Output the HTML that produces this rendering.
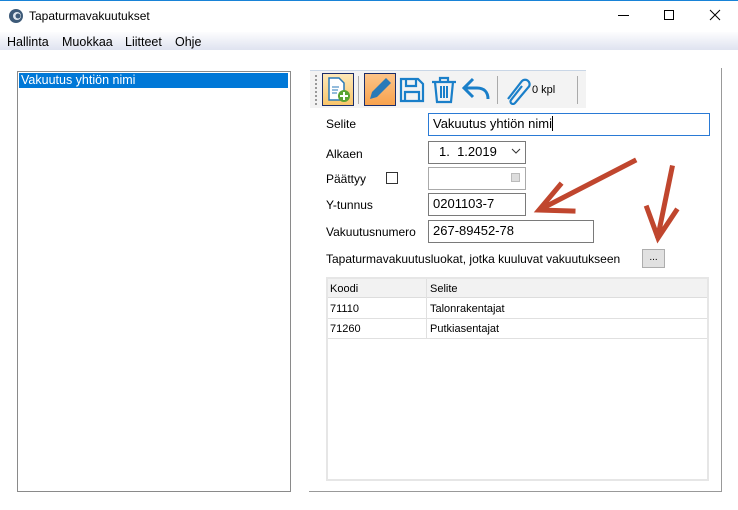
<!DOCTYPE html>
<html><head><meta charset="utf-8"><style>
*{margin:0;padding:0;box-sizing:border-box}
body{width:738px;height:510px;background:#fff;position:relative;overflow:hidden;font-family:"Liberation Sans",sans-serif;font-size:12px;color:#000}
.a{position:absolute}
.inp{position:absolute;border:1px solid #7a7a7a;background:#fff;font-size:13px;padding:2px 0 0 4px;height:23px}
.lbl{position:absolute;font-size:12px}
</style></head><body>
<div class="a" style="left:0;top:0;width:738px;height:1px;background:#1883d7"></div>
<svg class="a" style="left:8px;top:8px" width="16" height="16"><circle cx="8" cy="8" r="7" fill="#3d5a78"/><circle cx="9" cy="8" r="4" fill="#dfe6ee"/><circle cx="10" cy="8" r="2.5" fill="#3d5a78"/></svg>
<div class="a" style="left:29px;top:9px;font-size:12px">Tapaturmavakuutukset</div>
<div class="a" style="left:618px;top:15px;width:11px;height:1px;background:#000"></div>
<div class="a" style="left:664px;top:10px;width:10px;height:10px;border:1px solid #000"></div>
<svg class="a" style="left:709px;top:9px" width="12" height="12"><path d="M1 1L11 11M11 1L1 11" stroke="#000" stroke-width="1"/></svg>
<div class="a" style="left:0;top:32px;width:738px;height:18px;background:linear-gradient(#fdfdfe,#dfe3f0)"></div>
<div class="a" style="left:7px;top:35px;font-size:12.5px">Hallinta</div>
<div class="a" style="left:62px;top:35px;font-size:12.5px">Muokkaa</div>
<div class="a" style="left:125px;top:35px;font-size:12.5px">Liitteet</div>
<div class="a" style="left:175px;top:35px;font-size:12.5px">Ohje</div>
<div class="a" style="left:17px;top:71px;width:274px;height:421px;border:1px solid #8a8a8a"></div>
<div class="a" style="left:19px;top:73px;width:269px;height:15px;background:#0078d7;color:#fff;font-size:12.5px;padding-left:2px;line-height:15px">Vakuutus yhtiön nimi</div>
<div class="a" style="left:309px;top:491px;width:413px;height:1px;background:#999"></div>
<div class="a" style="left:721px;top:68px;width:1px;height:424px;background:#999"></div>
<div class="a" style="left:310px;top:70px;width:276px;height:38px;background:#f3f3f3;border-top:1px solid #c9d6e6"></div>
<div class="a" style="left:315px;top:75px;width:2px;height:30px;border-left:2px dotted #999"></div>
<div class="a" style="left:322px;top:73px;width:32px;height:33px;background:linear-gradient(#fde8b8,#f9c56a);border:1px solid #1b2d6a"></div>
<svg class="a" style="left:326px;top:76px" width="26" height="28"><path d="M3 2h10l5 5v17H3z" fill="#fff" stroke="#2a7ab8" stroke-width="1.5"/><path d="M6 11h7M6 14h6M6 17h5" stroke="#2a7ab8"/><circle cx="18" cy="20" r="6" fill="#5aa332"/><path d="M18 16v8M14 20h8" stroke="#fff" stroke-width="2"/></svg>
<div class="a" style="left:358px;top:76px;width:1px;height:28px;background:#aaa"></div>
<div class="a" style="left:364px;top:73px;width:32px;height:33px;background:linear-gradient(#fcc488,#f8a24e);border:1px solid #1b2d6a"></div>
<svg class="a" style="left:367px;top:76px" width="26" height="26"><path d="M3 23l2-7L19 2l5 5L10 21z" fill="#2a7ab8"/></svg>
<div class="a" style="left:399px;top:77px"><svg width="26" height="26"><path d="M2 2h17l5 5v17H2z" fill="none" stroke="#1a7fc9" stroke-width="2.2"/><path d="M7 2v7h10V2M6 24v-9h14v9" fill="none" stroke="#1a7fc9" stroke-width="2.2"/></svg></div>
<svg class="a" style="left:431px;top:76px" width="26" height="28"><path d="M1 6h24M9 6V2h8v4M4 6l2 20h14l2-20" fill="none" stroke="#1a7fc9" stroke-width="2.2"/><path d="M10 10v12M13 10v12M16 10v12" stroke="#1a7fc9" stroke-width="2"/></svg>
<svg class="a" style="left:462px;top:77px" width="28" height="24"><path d="M11 2L2 11l9 9M2 11h13c7 0 11 4 11 11" fill="none" stroke="#1a7fc9" stroke-width="3"/></svg>
<div class="a" style="left:497px;top:76px;width:1px;height:28px;background:#aaa"></div>
<svg class="a" style="left:503px;top:75px" width="28" height="30"><path d="M5 24L19 6a4.5 4.5 0 0 1 7 5.5L12 28a2.5 2.5 0 0 1-4-3l11-14" fill="none" stroke="#1a7fc9" stroke-width="2.2"/></svg>
<div class="a" style="left:532px;top:84px;font-size:11px">0 kpl</div>
<div class="a" style="left:577px;top:76px;width:1px;height:28px;background:#aaa"></div>
<div class="lbl" style="left:326px;top:117px">Selite</div>
<div class="inp" style="left:428px;top:113px;width:282px;border-color:#2a7ad5">Vakuutus yhtiön nimi <span style="border-left:1px solid #000"> </span></div>
<div class="lbl" style="left:326px;top:147px">Alkaen</div>
<div class="inp" style="left:428px;top:141px;width:98px;padding-left:10px">1.&nbsp; 1.2019</div>
<svg class="a" style="left:511px;top:148px" width="10" height="6"><path d="M1 1l4 4 4-4" fill="none" stroke="#333"/></svg>
<div class="lbl" style="left:326px;top:172px">Päättyy</div>
<div class="a" style="left:386px;top:172px;width:12px;height:12px;border:1px solid #333"></div>
<div class="inp" style="left:428px;top:167px;width:98px;border-color:#aaa"></div>
<div class="a" style="left:511px;top:173px;width:9px;height:9px;background:#ddd;border:1px solid #bbb"></div>
<div class="lbl" style="left:326px;top:198px">Y-tunnus</div>
<div class="inp" style="left:428px;top:193px;width:98px">0201103-7</div>
<div class="lbl" style="left:326px;top:225px">Vakuutusnumero</div>
<div class="inp" style="left:428px;top:220px;width:166px">267-89452-78</div>
<div class="lbl" style="left:326px;top:252px">Tapaturmavakuutusluokat, jotka kuuluvat vakuutukseen</div>
<div class="a" style="left:642px;top:249px;width:23px;height:19px;background:#e1e1e1;border:1px solid #adadad;font-size:10px;text-align:center;line-height:16px">...</div>
<div class="a" style="left:326px;top:277px;width:383px;height:204px;border:2px solid #e6e6e6;background:#fff"></div>
<div class="a" style="left:328px;top:279px;width:379px;height:19px;background:#f2f2f2;border-bottom:1px solid #ddd"></div>
<div class="a" style="left:328px;top:318px;width:379px;height:1px;background:#e0e0e0"></div>
<div class="a" style="left:328px;top:338px;width:379px;height:1px;background:#e0e0e0"></div>
<div class="a" style="left:426px;top:279px;width:1px;height:60px;background:#e0e0e0"></div>
<div class="a" style="left:330px;top:283px;font-size:11px">Koodi</div>
<div class="a" style="left:430px;top:283px;font-size:11px">Selite</div>
<div class="a" style="left:330px;top:303px;font-size:11px">71110</div>
<div class="a" style="left:430px;top:303px;font-size:11px">Talonrakentajat</div>
<div class="a" style="left:330px;top:323px;font-size:11px">71260</div>
<div class="a" style="left:430px;top:323px;font-size:11px">Putkiasentajat</div>
<svg class="a" style="left:0;top:0" width="738" height="510"><g stroke="#c0462e" stroke-width="5" fill="none" stroke-linecap="square"><path d="M634 161L541 209M560 185L539 210L573 211"/><path d="M672 168L658 236M647 208L658 238L676 211"/></g></svg>
</body></html>
